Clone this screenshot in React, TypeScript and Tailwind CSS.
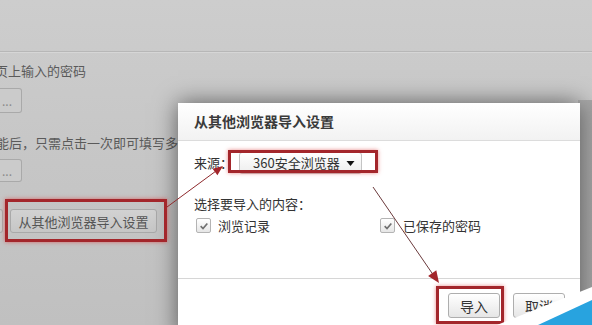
import React from "react";

function CheckBox() {
  return (
    <span className="flex h-[15px] w-[15px] items-center justify-center rounded-[2px] border border-[#b4b4b4] bg-gradient-to-b from-white to-[#e6e6e6]">
      <svg viewBox="0 0 12 12" className="h-[10px] w-[10px]">
        <path d="M2 6.2 L4.8 9 L10 3" fill="none" stroke="#6f6f6f" strokeWidth={2} />
      </svg>
    </span>
  );
}

function DialogButton({ label }: { label: string }) {
  return (
    <button className="h-[25px] w-[52px] rounded-[3px] border border-[#aeaeae] bg-gradient-to-b from-white to-[#e6e6e6] text-[14px] leading-none text-[#333]">
      {label}
    </button>
  );
}

export default function App() {
  return (
    <div className="relative h-[325px] w-[592px] overflow-hidden bg-gradient-to-b from-[#cdcdcd] via-[#c6c6c6] to-[#c0c0c0] font-['Noto_Sans_CJK_SC',sans-serif]">
      {/* settings page behind the overlay */}
      <div className="pt-[51px]">
        <div className="h-[2px] border-t border-[#b7b7b7] bg-[#d6d6d6]" />
        <p className="-ml-[5px] mt-[9px] text-[13px] leading-[18px] text-[#5a5a5a]">页上输入的密码</p>
        <div className="mt-[8px] flex h-[25px] w-[22px] items-center rounded-r-[3px] border border-l-0 border-[#a9a9a9] bg-[#cbcbcb] pl-[2px] text-[12px] text-[#8a8a8a]">
          ...
        </div>
        <p className="-ml-[4px] mt-[21px] text-[13px] leading-[18px] text-[#5a5a5a]">能后，只需点击一次即可填写多</p>
        <div className="mt-[7px] flex h-[23px] w-[22px] items-center rounded-r-[3px] border border-l-0 border-[#a9a9a9] bg-[#cbcbcb] pl-[2px] text-[12px] text-[#8a8a8a]">
          ...
        </div>
        <div className="mt-[27px] flex items-center gap-[7px]">
          <div className="h-[24px] w-[3px] rounded-r-[3px] border border-l-0 border-[#a9a9a9] bg-[#cbcbcb]" />
          <button className="h-[24px] w-[147px] rounded-[3px] border border-[#a9a9a9] bg-gradient-to-b from-[#d2d2d2] to-[#c6c6c6] text-[13px] leading-none text-[#555]">
            从其他浏览器导入设置
          </button>
        </div>
      </div>

      {/* darker band right of the dialog */}
      <div className="absolute right-0 top-[100px] h-[225px] w-[14px] bg-gradient-to-r from-[#b2b2b2] to-[#a6a6a6]" />

      {/* import dialog */}
      <div className="absolute left-[178px] top-[103px] flex w-[402px] flex-col bg-white shadow-[0_0_22px_rgba(0,0,0,0.55)]">
        <div className="flex h-[38px] items-center border-b border-[#dcdcdc] bg-gradient-to-b from-white to-[#f2f2f2] pl-[16px] text-[14px] font-bold text-[#3a3a3a]">
          从其他浏览器导入设置
        </div>
        <div className="h-[137px] pl-[16px] pt-[11px] text-[13px] text-[#333]">
          <div className="flex items-center gap-[6px]">
            <span>来源：</span>
            <div className="flex h-[22px] w-[123px] items-center justify-between rounded-[3px] border border-[#c4c4c4] bg-gradient-to-b from-white to-[#ededed] pl-[13px] pr-[6px]">
              <span>360安全浏览器</span>
              <svg viewBox="0 0 8 5" className="h-[5px] w-[9px]">
                <path d="M0 0 L8 0 L4 5 Z" fill="#111" />
              </svg>
            </div>
          </div>
          <p className="mt-[21px] leading-[18px]">选择要导入的内容：</p>
          <div className="mt-[3px] flex items-center pl-[2px]">
            <label className="flex w-[184px] items-center gap-[7px]">
              <CheckBox />
              <span>浏览记录</span>
            </label>
            <label className="flex items-center gap-[8px]">
              <CheckBox />
              <span>已保存的密码</span>
            </label>
          </div>
        </div>
        <div className="flex h-[60px] justify-end gap-[13px] border-t border-[#d6d6d6] pr-[15px] pt-[14px]">
          <DialogButton label="导入" />
          <DialogButton label="取消" />
        </div>
      </div>

      {/* red annotation boxes */}
      <div className="absolute left-[5px] top-[199px] h-[43px] w-[162px] border-[3px] border-[#a3262b] shadow-[0_0_4px_rgba(220,60,60,0.7)]" />
      <div className="absolute left-[228px] top-[150px] h-[23px] w-[150px] border-[3px] border-[#a3262b] shadow-[0_0_4px_rgba(220,60,60,0.6)]" />
      <div className="absolute left-[436px] top-[286px] h-[38px] w-[68px] border-[3px] border-[#a3262b] shadow-[0_0_4px_rgba(220,60,60,0.6)]" />

      {/* arrows and corner decoration */}
      <svg className="pointer-events-none absolute left-0 top-0" width={592} height={325}>
        <line x1={167} y1={207} x2={216} y2={171} stroke="#8f2a2d" strokeWidth={1} />
        <polygon points="223,166 217.4,175.2 212.6,168.8" fill="#a3262b" />
        <line x1={373} y1={187} x2={434} y2={276} stroke="#6b3a3c" strokeWidth={1} />
        <polygon points="439,283 428.1,276 436.3,270.3" fill="#a3262b" />
        <polygon points="497,325 592,287 592,325" fill="#ffffff" />
        <polygon points="538,325 592,300 592,325" fill="#28a3df" />
      </svg>
    </div>
  );
}
